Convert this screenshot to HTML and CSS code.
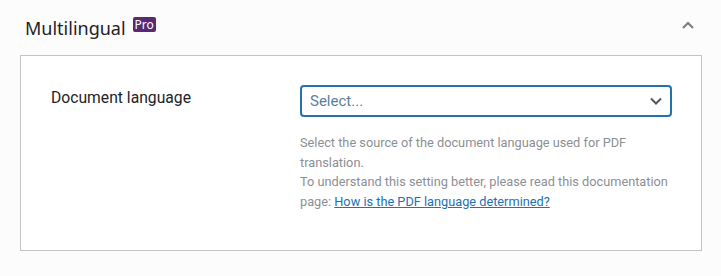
FILE: index.html
```html
<!DOCTYPE html>
<html>
<head>
<meta charset="utf-8">
<link rel="stylesheet" href="styles.css">
</head>
<body>
<div class="section">
  <div class="section-head">
    <h2 class="title">Multilingual<span class="pro">Pro</span></h2>
    <svg class="toggle" width="14" height="10" viewBox="0 0 14 10"><path d="M2 8 L7 3 L12 8" fill="none" stroke="#787c82" stroke-width="2"/></svg>
  </div>
  <div class="panel">
    <div class="row">
      <div class="label">Document language</div>
      <div class="field">
        <div class="select">
          <span class="placeholder">Select...</span>
          <svg class="chev" width="14" height="10" viewBox="0 0 14 10"><path d="M2 2.5 L7 7.5 L12 2.5" fill="none" stroke="#50575e" stroke-width="2"/></svg>
        </div>
        <p class="desc">Select the source of the document language used for PDF translation.<br>To understand this setting better, please read this documentation page: <a href="#">How is the PDF language determined?</a></p>
      </div>
    </div>
  </div>
</div>
</body>
</html>
```
FILE: styles.css
```css
html, body {
  margin: 0;
  padding: 0;
  background: #fcfcfc;
}
body {
  font-family: Roboto, "Liberation Sans", sans-serif;
  color: #1d2327;
}
.section {
  padding: 0 19px 0 20px;
}
.section-head {
  display: flex;
  align-items: center;
  justify-content: space-between;
  height: 55px;
  padding: 0 7px 0 5px;
}
.title {
  margin: 0;
  font-family: "Noto Sans", "Open Sans", sans-serif;
  font-weight: 400;
  font-size: 18px;
  color: #1d2327;
  display: flex;
  align-items: flex-start;
  line-height: 24px;
}
.pro {
  display: block;
  margin-left: 7px;
  margin-top: 1px;
  background: #5a2a71;
  color: #fff;
  font-size: 12px;
  line-height: 15px;
  height: 15px;
  padding: 0 2px;
  border-radius: 2px;
  font-family: "Noto Sans", sans-serif;
}
.toggle {
  display: block;
  position: relative;
  top: -3px;
}
.panel {
  background: #fff;
  border: 1px solid #c3c4c7;
  height: 194px;
  box-sizing: content-box;
}
.row {
  display: flex;
  padding: 29px 0 0 30px;
}
.label {
  width: 249px;
  font-size: 15.7px;
  line-height: 20px;
  padding-top: 3px;
  color: #1d2327;
}
.field {
  width: 372px;
}
.select {
  box-sizing: border-box;
  height: 32px;
  border: 2px solid #2271b1;
  border-radius: 4px;
  display: flex;
  align-items: center;
  justify-content: space-between;
  padding: 0 7px 0 8px;
}
.placeholder {
  font-size: 15px;
  color: #5b7e9c;
}
.chev {
  display: block;
}
.desc {
  margin: 16px 0 0 0;
  font-size: 12.75px;
  line-height: 19.5px;
  color: #8c8f94;
  width: 380px;
}
.desc a {
  color: #2271b1;
  text-decoration: underline;
}
```
